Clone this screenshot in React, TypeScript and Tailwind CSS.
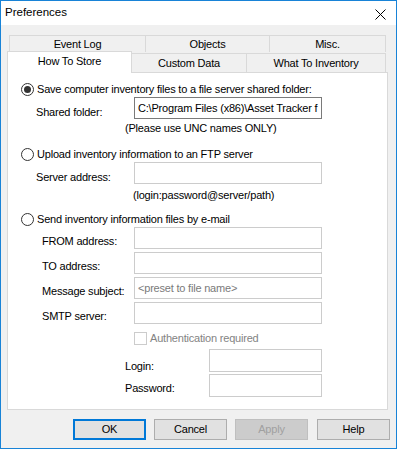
import React from 'react';

const font = { fontFamily: '"Liberation Sans", Arial, sans-serif' };

const Radio = ({ checked, label, mt }: { checked?: boolean; label: string; mt: string }) => (
  <div className={`flex items-center h-[14px] pl-[13px] ${mt}`}>
    <div className="w-[13px] h-[13px] rounded-full border border-[#333333] bg-white flex items-center justify-center">
      {checked && <div className="w-[7px] h-[7px] rounded-full bg-[#333333]" />}
    </div>
    <span className="ml-[3px] leading-[13px]">{label}</span>
  </div>
);

const Field = ({
  label,
  mt,
  pt,
  labelLeft = 'pl-[28px]',
  labelWidth = 'w-[126px]',
  inputWidth = 'w-[188px]',
  h = 'h-[22px]',
  dark,
  value,
  placeholder,
}: {
  label: string;
  mt: string;
  pt: string;
  labelLeft?: string;
  labelWidth?: string;
  inputWidth?: string;
  h?: string;
  dark?: boolean;
  value?: string;
  placeholder?: string;
}) => (
  <div className={`flex ${h} ${mt}`}>
    <div className={`${labelWidth} ${labelLeft} ${pt} leading-[13px] shrink-0`}>{label}</div>
    <div
      className={`${inputWidth} ${h} border bg-white overflow-hidden whitespace-nowrap px-[3px] leading-[20px] ${
        dark ? 'border-[#7a7a7a]' : 'border-[#cccccc]'
      }`}
    >
      {value}
      {placeholder && <span className="text-[#7a7a7a]">{placeholder}</span>}
    </div>
  </div>
);

export default function App() {
  return (
    <div
      className="w-[397px] h-[449px] border border-[#1883d7] bg-[#f0f0f0] text-[11px] text-black tracking-[-0.2px] flex flex-col select-none"
      style={font}
    >
      {/* title bar */}
      <div className="h-[24px] bg-white flex items-center justify-between pl-[4px] pr-[10px] shrink-0">
        <span className="tracking-normal text-[11.5px]">Preferences</span>
        <svg width="11" height="11" viewBox="0 0 11 11" className="mt-[2px]">
          <path d="M0.5 0.5 L10.5 10.5 M10.5 0.5 L0.5 10.5" stroke="#000" strokeWidth="1" />
        </svg>
      </div>

      <div className="pl-[6px] pt-[10px] flex flex-col">
        {/* tabs row 1 */}
        <div className="flex ml-[2px] h-[17px]">
          <div className="w-[136px] border-t border-l border-[#d9d9d9] flex items-center justify-center leading-[13px] pt-[1px]">Event Log</div>
          <div className="w-[124px] border-t border-l border-[#d9d9d9] flex items-center justify-center leading-[13px] pt-[1px]">Objects</div>
          <div className="w-[117px] border-t border-l border-r border-[#d9d9d9] flex items-center justify-center leading-[13px] pt-[1px]">Misc.</div>
        </div>
        {/* tabs row 2 */}
        <div className="flex h-[20px] items-end relative z-10">
          <div className="w-[125px] h-[22px] -mb-[1px] bg-white border-t border-l border-r border-[#d9d9d9] flex justify-center pt-[3px] leading-[13px]">
            How To Store
          </div>
          <div className="w-[114px] h-[19px] border-t border-[#d9d9d9] flex justify-center pt-[3px] leading-[13px]">Custom Data</div>
          <div className="w-[140px] h-[19px] border-t border-l border-r border-[#d9d9d9] flex justify-center pt-[3px] leading-[13px]">
            What To Inventory
          </div>
        </div>

        {/* panel */}
        <div className="w-[381px] h-[338px] bg-white border border-[#d9d9d9] flex flex-col">
          <Radio checked label="Save computer inventory files to a file server shared folder:" mt="mt-[9px]" />
          <Field label="Shared folder:" mt="mt-[1px]" pt="pt-[9px]" dark value="C:\Program Files (x86)\Asset Tracker f" />
          <div className="mt-[3px] h-[13px] leading-[13px] pl-[117px]">(Please use UNC names ONLY)</div>

          <Radio label="Upload inventory information to an FTP server" mt="mt-[12px]" />
          <Field label="Server address:" mt="mt-[1px]" pt="pt-[9px]" />
          <div className="mt-[5px] h-[13px] leading-[13px] pl-[125px]">(login:password@server/path)</div>

          <Radio label="Send inventory information files by e-mail" mt="mt-[10px]" />
          <Field label="FROM address:" mt="mt-[1px]" pt="pt-[8px]" labelLeft="pl-[34px]" />
          <Field label="TO address:" mt="mt-[3px]" pt="pt-[8px]" labelLeft="pl-[34px]" />
          <Field label="Message subject:" mt="mt-[3px]" pt="pt-[8px]" labelLeft="pl-[34px]" placeholder="<preset to file name>" />
          <Field label="SMTP server:" mt="mt-[3px]" pt="pt-[8px]" labelLeft="pl-[34px]" />

          <div className="flex items-center h-[13px] mt-[8px] pl-[126px]">
            <div className="w-[13px] h-[13px] border border-[#cccccc] bg-white" />
            <span className="ml-[3px] leading-[13px] text-[#838383]">Authentication required</span>
          </div>

          <Field label="Login:" mt="mt-[4px]" pt="pt-[11px]" labelLeft="pl-[117px]" labelWidth="w-[201px]" inputWidth="w-[113px]" h="h-[23px]" />
          <Field label="Password:" mt="mt-[2px]" pt="pt-[8px]" labelLeft="pl-[117px]" labelWidth="w-[201px]" inputWidth="w-[113px]" h="h-[23px]" />
        </div>

        {/* buttons */}
        <div className="flex gap-[8px] mt-[9px] pl-[66px]">
          <button className="w-[73px] h-[21px] bg-[#e1e1e1] border-2 border-[#0078d7] leading-[17px]">OK</button>
          <button className="w-[73px] h-[21px] bg-[#e1e1e1] border border-[#adadad] leading-[19px]">Cancel</button>
          <button className="w-[73px] h-[21px] bg-[#cccccc] border border-[#bfbfbf] text-[#a0a0a0] leading-[19px]">Apply</button>
          <button className="w-[73px] h-[21px] bg-[#e1e1e1] border border-[#adadad] leading-[19px] ml-[1px]">Help</button>
        </div>
      </div>
    </div>
  );
}
